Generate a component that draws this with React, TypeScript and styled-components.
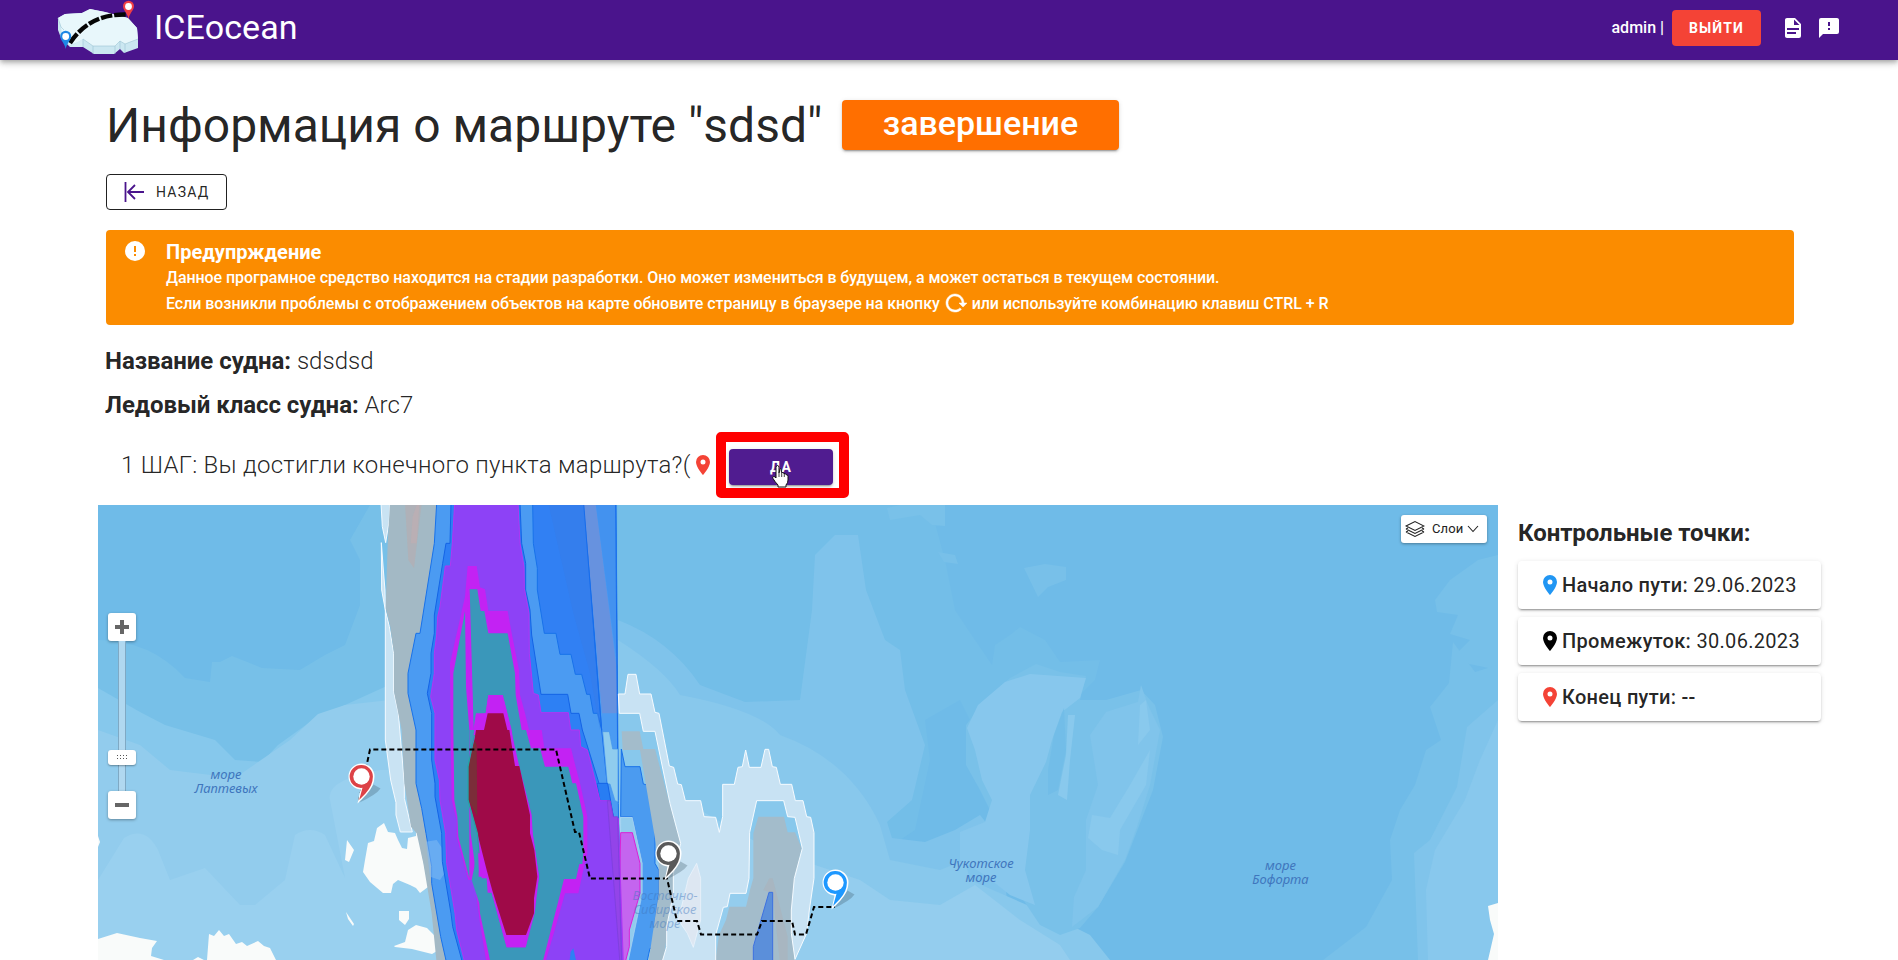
import React from "react";
import styled, { createGlobalStyle } from "styled-components";

const GlobalStyle = createGlobalStyle`
  *, *::before, *::after { box-sizing: border-box; }
  html, body { margin: 0; height: 960px; overflow: hidden; background: #fff; }
  body { font-family: Roboto, "Open Sans", sans-serif; color: rgba(0, 0, 0, 0.87); }
`;

const Page = styled.div`
  height: 960px;
  overflow: hidden;
  display: flex;
  flex-direction: column;
`;

const Header = styled.header`
  height: 60px;
  flex: none;
  background: #4a148c;
  color: #fff;
  display: flex;
  align-items: center;
  padding: 0 57px 5px 56px;
  box-shadow: 0 2px 4px -1px rgba(0, 0, 0, 0.2), 0 4px 5px rgba(0, 0, 0, 0.14), 0 1px 10px rgba(0, 0, 0, 0.12);
`;

const Logo = styled.svg`
  width: 84px;
  height: 55px;
  flex: none;
`;

const Brand = styled.div`
  margin-left: 14px;
  padding-bottom: 1px;
  font-size: 34px;
  line-height: 40px;
  letter-spacing: 0.1px;
  flex: 1;
`;

const UserName = styled.span`
  font-size: 16px;
  font-weight: 500;
  margin-right: 8px;
`;

const Button = styled.button<{ $bg: string; $width: number }>`
  width: ${(p) => p.$width}px;
  height: 36px;
  border: 0;
  border-radius: 4px;
  background: ${(p) => p.$bg};
  color: #fff;
  font: 700 14px/36px Roboto, sans-serif;
  letter-spacing: 1.1px;
  padding: 0;
`;

const RaisedButton = styled(Button)`
  box-shadow: 0 3px 1px -2px rgba(0, 0, 0, 0.2), 0 2px 2px rgba(0, 0, 0, 0.14), 0 1px 5px rgba(0, 0, 0, 0.12);
`;

const HeaderIcons = styled.div`
  display: flex;
  gap: 12px;
  margin-left: 20px;
`;

const Glyph = styled.svg<{ $size?: number }>`
  width: ${(p) => p.$size ?? 24}px;
  height: ${(p) => p.$size ?? 24}px;
  fill: currentColor;
  flex: none;
`;

const Intro = styled.section`
  flex: none;
  height: 445px;
  padding: 40px 104px 0 106px;
`;

const TitleRow = styled.div`
  display: flex;
  align-items: center;
  height: 50px;
`;

const Title = styled.h1`
  margin: 0;
  width: 736px;
  font-size: 48px;
  line-height: 50px;
  padding-top: 2px;
  font-weight: 400;
  white-space: nowrap;
`;

const Status = styled.div`
  width: 277px;
  height: 50px;
  border-radius: 4px;
  background: #ff6f00;
  color: #fff;
  font-size: 34px;
  font-weight: 500;
  line-height: 47px;
  text-align: center;
  box-shadow: 0 3px 1px -2px rgba(0, 0, 0, 0.2), 0 2px 2px rgba(0, 0, 0, 0.14), 0 1px 5px rgba(0, 0, 0, 0.12);
`;

const BackButton = styled.button`
  display: flex;
  align-items: center;
  width: 121px;
  height: 36px;
  margin: 24px 0 20px;
  padding: 0 0 0 15px;
  gap: 9px;
  border: 1px solid #212121;
  border-radius: 4px;
  background: #fff;
  color: rgba(0, 0, 0, 0.87);
  font: 400 14px/34px Roboto, sans-serif;
  letter-spacing: 1.25px;
`;

const BackIcon = styled.svg`
  width: 25px;
  height: 24px;
  fill: none;
  stroke: #4a148c;
  stroke-width: 1.8;
`;

const Alert = styled.div`
  display: flex;
  height: 95px;
  padding: 9px 17px;
  gap: 18px;
  border-radius: 4px;
  background: #fb8c00;
  color: #fff;
`;

const AlertTitle = styled.div`
  font-size: 20px;
  font-weight: 700;
  line-height: 26px;
`;

const AlertLine = styled.div<{ $spacing: number }>`
  display: flex;
  align-items: center;
  font-size: 16px;
  font-weight: 500;
  line-height: 26px;
  height: 26px;
  letter-spacing: ${(p) => p.$spacing}px;
  white-space: pre;
`;

const ReloadSlot = styled.span`
  display: flex;
  height: 26px;
  svg { stroke: #fff; stroke-width: 0.5; }
`;

const AlertText = styled.div`
  padding-left: 1px;
`;

const Fact = styled.p`
  margin: 0;
  font-size: 24px;
  line-height: 44px;
  font-weight: 300;
  letter-spacing: 0.05px;
  white-space: nowrap;
  b { font-weight: 700; letter-spacing: -0.05px; }
`;

const Facts = styled.div`
  margin: 14px 0 0 -1px;
`;

const StepRow = styled.div`
  display: flex;
  align-items: center;
  height: 66px;
  margin-top: 5px;
  padding-left: 15px;
  font-size: 24px;
  font-weight: 300;
  white-space: nowrap;
`;

const StepText = styled.span`
  width: 570px;
  letter-spacing: 0.26px;
`;

const PinSlot = styled.span<{ $color: string }>`
  color: ${(p) => p.$color};
  display: flex;
  width: 24px;
`;

const Highlight = styled.div`
  position: relative;
  width: 133px;
  height: 66px;
  margin-left: 1px;
  border: 10px solid #f00;
  border-radius: 5px;
  background: #fff;
  display: flex;
  padding: 7px 0 0 3px;
`;

const Cursor = styled.svg`
  position: absolute;
  left: 44px;
  top: 22px;
  width: 20px;
  height: 25px;
`;

const Workspace = styled.main`
  display: flex;
  height: 455px;
  padding-left: 98px;
`;

const MapPane = styled.div`
  position: relative;
  width: 1400px;
  height: 455px;
  flex: none;
  overflow: hidden;
  background: #6fbbe8;
`;

const MapCanvas = styled.svg`
  display: block;
  width: 1400px;
  height: 455px;
`;

const MapLabel = styled.text`
  font: italic 400 13px "Noto Sans", sans-serif;
  text-anchor: middle;
  fill: #3f76bd;
`;

const LayersButton = styled.div`
  position: absolute;
  right: 11px;
  top: 10px;
  width: 86px;
  height: 28px;
  display: flex;
  align-items: center;
  padding-left: 4px;
  border-radius: 3px;
  background: #fff;
  box-shadow: 0 1px 3px rgba(0, 0, 0, 0.35);
  color: #222;
  font-size: 13px;
  letter-spacing: 0.1px;
  svg { fill: none; stroke: #222; stroke-width: 1.1; }
  span { margin: 0 4px 1px 7px; }
`;

const ZoomControl = styled.div`
  position: absolute;
  left: 10px;
  top: 108px;
  width: 28px;
  height: 206px;
  display: flex;
  flex-direction: column;
  align-items: center;
`;

const ZoomButton = styled.div`
  display: grid;
  place-items: center;
  width: 28px;
  height: 28px;
  border-radius: 3px;
  background: #fff;
  box-shadow: 0 1px 3px rgba(0, 0, 0, 0.35);
  svg { width: 14px; height: 14px; fill: #666; }
`;

const ZoomTrack = styled.div`
  width: 8px;
  flex: 1;
  background: #b0d8f0;
  border: solid #7fa9c4;
  border-width: 0 1px;
`;

const ZoomRunner = styled.div`
  position: absolute;
  top: 137px;
  width: 28px;
  height: 15px;
  border-radius: 3px;
  background: #fff;
  box-shadow: 0 1px 2px rgba(0, 0, 0, 0.35);
  display: grid;
  place-items: center;
`;

const Side = styled.aside`
  padding: 18px 0 0 20px;
  width: 323px;
`;

const SideTitle = styled.h2`
  margin: 0 0 18px;
  font-size: 24px;
  line-height: 20px;
  font-weight: 700;
  letter-spacing: -0.05px;
  white-space: nowrap;
`;

const PointCard = styled.div`
  display: flex;
  align-items: center;
  width: 303px;
  height: 48px;
  margin-bottom: 8px;
  padding-left: 20px;
  border-radius: 4px;
  background: #fff;
  font-size: 20px;
  letter-spacing: 0.3px;
  white-space: pre;
  box-shadow: 0 3px 1px -2px rgba(0, 0, 0, 0.2), 0 2px 2px rgba(0, 0, 0, 0.14), 0 1px 5px rgba(0, 0, 0, 0.12);
  b { font-weight: 500; }
`;

const ICONS = {
  file: "M13,9H18.5L13,3.5V9M6,2H14L20,8V20A2,2 0 0,1 18,22H6C4.89,22 4,21.1 4,20V4C4,2.89 4.89,2 6,2M15,18V16H6V18H15M18,14V12H6V14H18Z",
  message: "M13,10H11V6H13M13,14H11V12H13M20,2H4A2,2 0 0,0 2,4V22L6,18H20A2,2 0 0,0 22,16V4C22,2.89 21.1,2 20,2Z",
  alert: "M13,13H11V7H13M13,17H11V15H13M12,2A10,10 0 0,0 2,12A10,10 0 0,0 12,22A10,10 0 0,0 22,12A10,10 0 0,0 12,2Z",
  pin: "M12,11.5A2.5,2.5 0 0,1 9.5,9A2.5,2.5 0 0,1 12,6.5A2.5,2.5 0 0,1 14.5,9A2.5,2.5 0 0,1 12,11.5M12,2A7,7 0 0,0 5,9C5,14.25 12,22 12,22C12,22 19,14.25 19,9A7,7 0 0,0 12,2Z",
  reload: "M2 12C2 16.97 6.03 21 11 21C13.39 21 15.68 20.06 17.4 18.4L15.9 16.9C14.63 18.25 12.86 19 11 19C4.76 19 1.64 11.46 6.05 7.05C10.46 2.64 18 5.77 18 12H15L19 16H19.1L23 12H20C20 7.03 15.97 3 11 3C6.03 3 2 7.03 2 12Z",
};

const Icon = ({ name, size }: { name: keyof typeof ICONS; size?: number }) => (
  <Glyph viewBox="0 0 24 24" $size={size}>
    <path d={ICONS[name]} />
  </Glyph>
);

const LogoPin = ({ x, y, color }: { x: number; y: number; color: string }) => (
  <g transform={`translate(${x} ${y})`}>
    <path d="M0 18C-1.500 11-5.500 9.500-5.500 5A5.500 5.200 0 0 1 5.500 5C5.500 9.500 1.500 11 0 18Z" fill={color} />
    <circle cx="0" cy="5.500" r="3.400" fill="#fff" />
  </g>
);

const IceLogo = () => (
  <Logo viewBox="0 0 84 55">
    <path d="M2 18L9 14L26 13L34 9L49 12L72 18L81 28L82 40V48L68 53L64 49L58 54H38L27 47H14L5 38L2 30Z" fill="#cbe7f1" />
    <path d="M2 18L9 14L26 13L34 9L49 12L72 18L81 28L82 39L69 44L64 41L59 46H37L27 39L22 42L14 45L6 34L5 27Z" fill="#e8f7fb" />
    <path d="M14 47L27 39V47Z" fill="#d6edf5" />
    <path d="M2 18L5 27L8 30M27 39V47M27 39L37 46H59L64 41L69 44L82 39M37 46V54M59 46V54M64 41V49M69 44V53" fill="none" stroke="#9cc5d4" strokeWidth=".6" />
    <path d="M14 43Q34 13 72 14.500" fill="none" stroke="#050505" strokeWidth="4.4" strokeDasharray="11.500 2" />
    <LogoPin x={72.5} y={1} color="#ef3e45" />
    <LogoPin x={9.7} y={31} color="#1e88e5" />
  </Logo>
);

const MapPin = ({ x, y, color }: { x: number; y: number; color: string }) => (
  <g transform={`translate(${x} ${y})`}>
    <path d="M-2 26L12 8L19 12Q15 18-2 26Z" fill="#3c5668" opacity=".3" />
    <path d="M0 0m-13 0a13 13 0 1 1 26 0Q13 9 5 18L-4 27L-1 13A13 13 0 0 1-13 0Z" fill="#fff" />
    <path d="M0-11.4A11.4 11.4 0 0 1 11.4 0Q11.4 9 4 17L-2.4 23.5L1 11.3A11.4 11.4 0 1 1 0-11.4Z" fill={color} />
    <circle r="8.2" fill="#fff" />
  </g>
);

/* Sea depth contours, in page pixels. */
const SeaBed = () => (
  <g>
    <path d="M98 640Q150 640 185 678L210 682L212 662L220 662L232 656L262 668L300 670L325 655L345 645L360 605V560L350 540L370 505H480V960H98Z" fill="#77c0e8" />
    <path d="M98 688L140 712L165 725L215 740L235 760L262 762L278 745L310 722L345 705L400 680H480V960H98Z" fill="#86c8ec" />
    <path d="M98 730L140 745L170 770L235 778L290 740L318 714L345 705L480 690V960H98Z" fill="#92cced" />
    <path d="M98 880L124 838Q145 825 158 850L170 880L205 868L240 905L255 905L285 880L295 835Q310 825 325 835L345 878L330 800Q325 780 380 770H480V960H98Z" fill="#99d0ef" />

    <path d="M618 505H930L945 560L955 610L975 640L992 665L995 645L1010 635L1020 627L1045 640L1060 662L1100 660L1095 680L1075 700L990 760L960 700L925 720L930 760L915 830L885 850L880 960H618Z" fill="#73bee8" />
    <path d="M618 620Q670 640 700 685L745 702L800 700L812 610L815 555L835 535L858 535L866 590L885 640L900 650L905 690L925 745L912 800L887 822L892 838L925 842L955 830L980 815L1000 840L1010 925L1080 960H618Z" fill="#7fc3eb" />
    <path d="M618 640Q665 670 680 695Q760 710 780 735Q850 760 880 825L890 860L940 870L965 860L970 880L1050 915L1090 935L1110 960H618Z" fill="#88c8ec" />
    <path d="M618 800L700 810L770 850L860 880L890 900L940 905L975 885L1020 920L1060 945L1070 960H618Z" fill="#94cdee" />

    <path d="M985 700L1010 678L1036 664L1060 672L1086 676L1080 700L1106 700L1141 690L1155 705L1163 737L1153 790L1125 862L1098 907L1080 928L1060 935L1040 925L1010 880L1000 830L980 790L966 765L966 725Z" fill="#79c1e9" />
    <path d="M978 705L1005 682L1030 674L1086 678L1080 698L1062 712L1052 740L1046 762L1030 795L1030 830L1025 870L1035 905L1010 895L985 875L960 860V832L985 822L992 800L982 780L975 750L967 728Z" fill="#87c7ed" />
    <path d="M1141 685L1148 705L1160 730L1150 785L1137 827L1125 860L1098 907L1072 927L1074 897L1086 870V820L1098 785L1090 735L1106 712L1138 702Z" fill="#80c4eb" />
    <path d="M1150 750L1146 785L1120 830L1118 855L1102 850L1088 838L1092 815L1110 818L1130 785ZM1075 715L1070 760L1067 800L1058 795L1066 755L1068 715ZM1146 700L1150 730L1138 745L1140 705Z" fill="#89c9ed" />
    <path d="M1054 735L1064 708L1066 750L1058 790L1048 795L1048 770Z" fill="#72bde8" />
    <path d="M1024 568L1045 564L1066 567L1066 580L1048 587L1038 597ZM938 552L955 555L958 564L944 562Z" fill="#78c0e9" />
    <path d="M887 508L900 505H945V526L932 525L920 515L890 520Z" fill="#79c1e9" />
    <path d="M1498 555L1478 560L1450 580L1435 600L1437 612L1458 615L1450 634L1470 640L1455 655L1460 662L1498 670Z" fill="#77c0e9" />
    <path d="M1498 665L1475 672L1453 642L1449 683L1430 707L1441 740L1426 750L1415 785L1400 810L1390 840L1392 880L1366 927L1323 960H1498Z" fill="#77c0e9" />
    <path d="M1498 700L1467 727L1457 787L1430 840L1414 853L1418 960H1498Z" fill="#80c4eb" />
    <path d="M1498 720L1480 760L1465 800L1435 850L1426 890L1428 960H1498Z" fill="#88c8ed" />
  </g>
);

const Land = () => (
  <g fill="#f9fbfa">
    <path d="M98 939L117 933L140 938L157 941L152 948L151 956L164 960H98ZM207 960L209 934L214 936L219 930L224 936L229 934L236 944L242 942L247 946L258 941L264 946L270 948L276 960ZM193 960L198 957L204 960Z" />
    <path d="M98 836L100 842L98 847ZM347 840L354 850L349 862L345 860ZM346 912L354 924L353 926L348 919ZM399 911L409 911V919L405 925L399 920ZM394 946L405 942L408 930L416 925L427 928L436 937L437 951L432 954L412 949L395 947Z" />
    <path d="M368 843L374 841L377 828L384 823L388 832L395 833L398 840L402 848L407 849L408 838L416 836L416 826L421 832L421 850L426 875L432 884L420 893L416 888L410 885L398 880L393 884L391 893H383L370 882L363 872L365 860Z" />
    <path d="M1488 906L1498 903V960H1488L1494 934L1490 920Z" />
  </g>
);

/* Ice fields: drawn on a grid of one third of a pixel with its origin at (340, 500). */
const IceFields = () => (
  <g transform="translate(340 500) scale(.333333)" strokeWidth="3" strokeLinejoin="round">
    <path d="M123 10H150L148 60L137 128L127 80ZM124 128L130 210L135 270L136 330L148 380L161 460V575L175 640L193 850V895L217 996H181L168 945V908L152 840L136 720V330L125 270Z" fill="#c9e3f3" stroke="#f4faff" />
    <path d="M150 10H300L430 1390H290L275 1240L250 1090L230 1000L213 980L193 850L185 690L162 575V460L150 375L137 325L143 128Z" fill="#a3b9c5" />
    <path d="M195 10H245L222 205L205 180Z" fill="#b3afb3" opacity=".75" />
    <path d="M212 130L218 50L230 15L238 15L230 130Z" fill="#c1aeb0" opacity=".6" />

    <path d="M844 747L855 800H900L910 852L922 855L945 950V1090L956 1110V1180L943 1280V1345H930L920 1390H860L875 1300L907 1180V1090L877 950H842Z" fill="#4b9bf0" stroke="#1871ea" />
    <path d="M290 10L283 130L240 400H228L204 520V580L228 690V850L245 925L258 1000L275 1100V1150L302 1310L320 1390H840L835 910L828 10Z" fill="#4b9bf2" stroke="#1871ea" />
    <path d="M258 1025L290 1020L310 1050L350 1065L300 1140L270 1130Z" fill="#82b9f2" opacity=".55" />
    <path d="M842 952H877L907 1090V1180L863 1390H840Z" fill="#92cced" stroke="#b3d8f4" strokeWidth="2" />
    <path d="M578 10L580 130L592 205V270L613 400H648L660 463H693L706 523H725L740 583H750L760 640H773L785 690L733 10Z" fill="#3180f3" stroke="#1871ea" />
    <path d="M625 10L700 340L750 520L780 690L733 10Z" fill="#367ce8" opacity=".55" />
    <path d="M731 10H767L828 490L834 640H786Z" fill="#6792df" />
    <path d="M767 10H827L832 500Z" fill="#4392ef" />
    <path d="M731 10L785 690L802 855L840 1390M827 10L834 900" fill="none" stroke="#176cec" />
    <path d="M788 695H808L818 747H834V906L825 902L810 852H802Z" fill="#8fccee" stroke="#4496ec" strokeWidth="2" />

    <path d="M333 10L330 130H318L308 190L283 345V400L273 460V520L262 580L275 640V780L285 850V890L305 1000L307 1085L333 1240L338 1280L368 1390H850L835 955H820L810 902L777 850L745 747L727 690L717 640H693L683 583H603L575 405L570 330L557 270V190L545 130L540 10Z" fill="#2d80f4" stroke="#1463e6" />
    <path d="M771 850H803L820 950L810 902H780Z" fill="#287df3" stroke="#1463e6" />
    <path d="M842 998H877L900 1090V1180L868 1290V1340L855 1390H835Z" fill="#c465ef" stroke="#dc20d6" />
    <path d="M344 10L337 130L331 198H316L300 320L293 350L290 405L283 460V520L272 590L285 640V780L298 840L300 900L317 1000L320 1090L345 1240L350 1290L375 1390H850L835 955H820L810 902H780L755 800L742 750L722 740L718 690H692L685 638H603L595 585L580 580L568 460L567 340L553 265L552 200L540 130L534 10Z" fill="#8d42f6" stroke="#b234f3" />
    <path d="M802 902H810L820 950H833L845 1390H840Z" fill="#9344e9" stroke="#7940d8" strokeWidth="2" />
    <path d="M688 1390L692 1355L700 1345L710 1390Z" fill="#2d80f4" />

    <path d="M383 198H410L420 262L435 268L445 333H503L515 400L537 510L540 585L555 640L567 690H605L613 745H693L708 805L720 850L742 950V1060L732 1100L715 1180H675L650 1270L615 1390H440L420 1270L403 1140H385L350 1010V960L335 900L332 690L330 490L375 290Z" fill="#c322f3" />
    <path d="M387 268H412L422 333H433L445 400H503L525 520L527 585L545 690H558L573 745H600L615 800H685L697 850H708L730 950V1060L727 1092H718L708 1137H672L607 1390H452L420 1240L418 1210L395 1140L403 1100L405 1040L412 970L416 1130H440L455 1178L500 1342H557L597 1130L570 945L538 800L502 640L488 585H445L437 640H408L400 690Z" fill="#3a97ba" />
    <path d="M375 333L378 560L388 690V1135L355 1010L352 950L343 900L340 690V520Z" fill="#3a97ba" />
    <path d="M388 690L403 690L412 700L388 800V900L412 1000L416 1120L403 1080L392 1000Z" fill="#3a97ba" />
    <path d="M385 268L397 690" fill="none" stroke="#c322f3" strokeWidth="8" />
    <path d="M445 585H488L502 640L515 690L530 798L538 800L575 945L578 1000L597 1130L584 1240L557 1342H500L455 1178H443L440 1135H425L412 1000L385 900V800L403 690L408 645L437 640Z" fill="#c322f3" />
    <path d="M443 640H490L502 690H508L525 798H538L570 945V1000L583 1050L592 1130L582 1195V1240L558 1305H499L458 1175L440 1110L412 1000L385 900V800L403 720L408 690H432Z" fill="#9f0a48" />
    <path d="M403 720L410 735L412 950L385 900V800Z" fill="#7b2d39" />
    <path d="M403 705L384 800V900L412 1000L417 1060" fill="none" stroke="#24a3a4" strokeWidth="4" />

    <path d="M845 694H899L910 747H945L1010 990L1022 1030L1000 1120V1180L980 1310L970 1390H925L956 1180V1080L900 750H848Z" fill="#a3bccb" />
    <path d="M1125 1390L1137 1305L1158 1260L1168 1220H1218L1230 1170L1240 1135V1000L1255 950H1332L1343 997H1365L1385 1045L1363 1135L1355 1230L1365 1390Z" fill="#a3bccb" />
    <path d="M1270 1170L1288 1135H1298L1343 1310V1390H1320L1298 1180Z" fill="#a9b3bc" opacity=".7" />
    <path d="M835 582H855L864 523H888L899 582H933L945 637L957 640L988 798L1001 802L1013 852L1024 854L1036 902H1082L1092 950L1127 952L1138 997L1148 950V853H1183L1194 802L1207 800L1217 750L1228 802H1263L1275 748H1286L1297 800L1309 802L1321 853H1355L1366 902H1389L1400 950L1412 952L1422 998V1135L1408 1230L1400 1300L1365 1378L1354 1300V1230L1363 1135L1387 1045L1365 952L1343 950L1331 902H1250L1229 997L1227 1135L1218 1180H1170L1162 1220L1150 1222L1127 1305V1390H965L980 1340V1280L1000 1180V1120L1022 1030L990 910L945 694H910L899 640H838Z" fill="#c8e2f3" stroke="#f6fbff" />
    <path d="M1070 1090L1082 1135V1260L1060 1342L1042 1300L1015 1260L1045 1135Z" fill="#dde7f2" stroke="#eef6fe" strokeWidth="2" />
    <path d="M1287 1177H1298V1390H1240V1340L1260 1270Z" fill="#5b8fda" stroke="#3d70e0" />
  </g>
);

const SeaName = ({ x, y, lines, faded }: { x: number; y: number; lines: string[]; faded?: boolean }) => (
  <g opacity={faded ? 0.45 : 1}>
    {lines.map((line, i) => (
      <MapLabel key={line} x={x} y={y + i * 14}>{line}</MapLabel>
    ))}
  </g>
);

const RouteMap = () => (
  <MapPane>
    <MapCanvas viewBox="98 505 1400 455">
      <SeaBed />
      <Land />
      <IceFields />
      <SeaName x={226} y={779} lines={["море", "Лаптевых"]} />
      <SeaName x={665} y={900} lines={["Восточно-", "Сибирское", "море"]} faded />
      <SeaName x={981} y={868} lines={["Чукотское", "море"]} />
      <SeaName x={1280.5} y={870} lines={["море", "Бофорта"]} />
      <path d="M359 801L370 749.500H556L575 832H579L590 878.500H667L677 921H697L701 934.500H757L762 921H792L795 934.500H806L814 907H835" fill="none" stroke="#000" strokeWidth="2" strokeDasharray="5 3" />
      <MapPin x={361.500} y={776.500} color="#dd4247" />
      <MapPin x={668.500} y={853.500} color="#595959" />
      <MapPin x={835.500} y={882.500} color="#1e98ff" />
    </MapCanvas>
    <ZoomControl>
      <ZoomButton><svg viewBox="0 0 14 14"><path d="M5 0h4v5h5v4H9v5H5V9H0V5h5Z" /></svg></ZoomButton>
      <ZoomTrack />
      <ZoomButton><svg viewBox="0 0 14 14"><path d="M0 5h14v4H0Z" /></svg></ZoomButton>
      <ZoomRunner>
        <svg width="11" height="5" viewBox="0 0 11 5">
          <path d="M0 .5H11M0 3.500H11" stroke="#555" strokeDasharray="1 2" />
        </svg>
      </ZoomRunner>
    </ZoomControl>
    <LayersButton>
      <svg width="20" height="18" viewBox="0 0 20 18">
        <path d="M1 6L10 1.500L19 6L10 10.500ZM1 9L10 13.500L19 9M1 9L3 8M19 9L17 8M1 12L10 16.500L19 12M1 12L3 11M19 12L17 11" />
      </svg>
      <span>Слои</span>
      <svg width="12" height="8" viewBox="0 0 12 8"><path d="M1 1L6 6.500L11 1" /></svg>
    </LayersButton>
  </MapPane>
);

const POINTS = [
  { color: "#2196f3", label: "Начало пути:", value: "29.06.2023" },
  { color: "#000", label: "Промежуток:", value: "30.06.2023" },
  { color: "#f44336", label: "Конец пути: --", value: "" },
];

export default function App() {
  return (
    <Page>
      <GlobalStyle />
      <Header>
        <IceLogo />
        <Brand>ICEocean</Brand>
        <UserName>admin |</UserName>
        <Button $bg="#f44336" $width={89}>ВЫЙТИ</Button>
        <HeaderIcons>
          <Icon name="file" />
          <Icon name="message" />
        </HeaderIcons>
      </Header>
      <Intro>
        <TitleRow>
          <Title>Информация о маршруте "sdsd"</Title>
          <Status>завершение</Status>
        </TitleRow>
        <BackButton>
          <BackIcon viewBox="0 0 25 24">
            <path d="M3.500 2V22M22 12H6M13 5L6 12L13 19" />
          </BackIcon>
          НАЗАД
        </BackButton>
        <Alert>
          <Icon name="alert" />
          <AlertText>
            <AlertTitle>Предупрждение</AlertTitle>
            <AlertLine $spacing={-0.065}>Данное програмное средство находится на стадии разработки. Оно может измениться в будущем, а может остаться в текущем состоянии.</AlertLine>
            <AlertLine $spacing={-0.045}>
              {"Если возникли проблемы с отображением объектов на карте обновите страницу в браузере на кнопку "}
              <ReloadSlot><Icon name="reload" /></ReloadSlot>
              {" или используйте комбинацию клавиш CTRL + R"}
            </AlertLine>
          </AlertText>
        </Alert>
        <Facts>
          <Fact><b>Название судна:</b> sdsdsd</Fact>
          <Fact><b>Ледовый класс судна:</b> Arc7</Fact>
        </Facts>
        <StepRow>
          <StepText>1 ШАГ: Вы достигли конечного пункта маршрута?(</StepText>
          <PinSlot $color="#f44336"><Icon name="pin" /></PinSlot>
          <Highlight>
            <RaisedButton $bg="#501c90" $width={104}>ДА</RaisedButton>
            <Cursor viewBox="0 0 20 25">
              <path d="M6 14V3.500Q6 1.500 7.500 1.500T9 3.500V9Q11-.0 11.500 8.500Q13 8 14 9.500Q15.500 9 16.500 11Q18 10.500 18 12.500V16Q18 19 16 21V23H8V21Q5 18 3 14.500Q2 12.500 3.500 12.500Q5 12.500 6 14Z" fill="#fff" stroke="#111" strokeWidth="1" />
              <path d="M9 9V13M11.700 9V13M14.300 10V13" stroke="#111" strokeWidth=".8" />
            </Cursor>
          </Highlight>
        </StepRow>
      </Intro>
      <Workspace>
        <RouteMap />
        <Side>
          <SideTitle>Контрольные точки:</SideTitle>
          {POINTS.map((p) => (
            <PointCard key={p.label}>
              <PinSlot $color={p.color}><Icon name="pin" /></PinSlot>
              <b>{p.label}</b>{p.value && " " + p.value}
            </PointCard>
          ))}
        </Side>
      </Workspace>
    </Page>
  );
}
